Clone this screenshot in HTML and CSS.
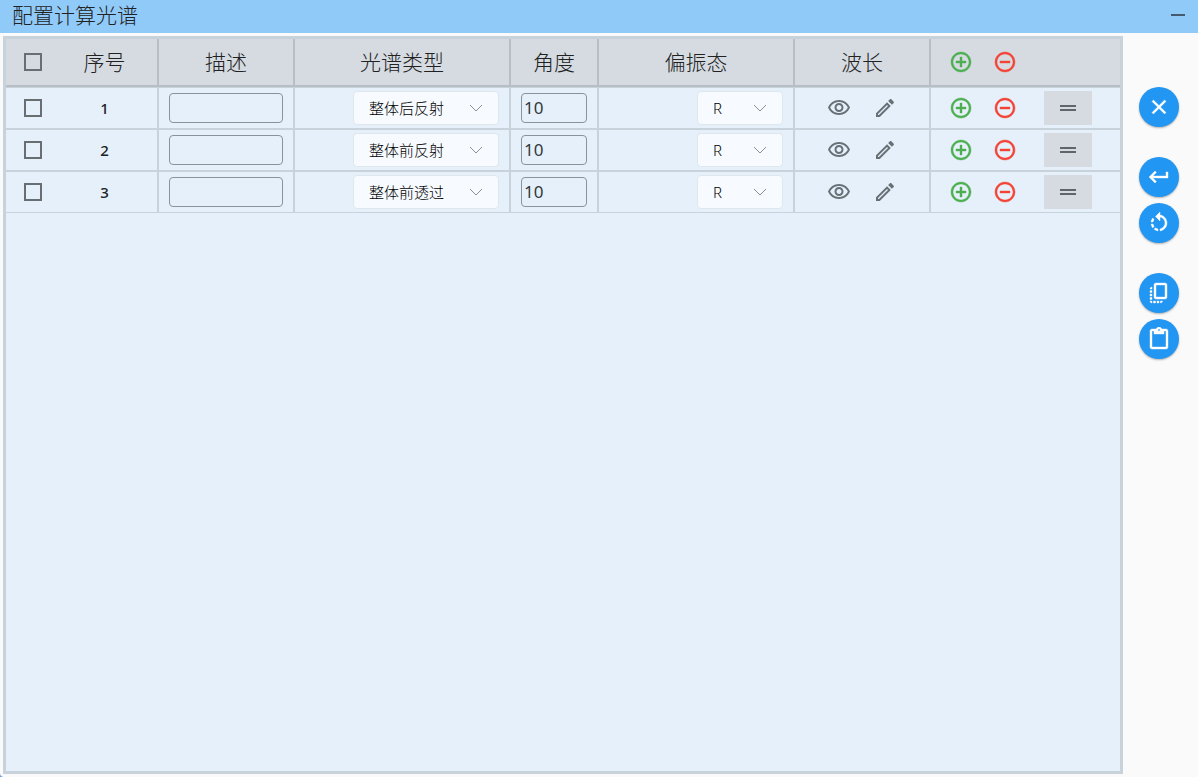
FILE: index.html
```html
<!DOCTYPE html>
<html lang="zh-CN">
<head>
    <meta charset="UTF-8">
    <meta name="viewport" content="width=device-width, initial-scale=1.0">
    <title>配置计算光谱</title>
    <link rel="stylesheet" href="styles.css">
</head>
<body>

<svg class="sprite" aria-hidden="true">
    <symbol id="plus" viewBox="0 0 24 24"><path d="M13 7h-2v4H7v2h4v4h2v-4h4v-2h-4V7zm-1-5C6.480 2 2 6.480 2 12s4.480 10 10 10 10-4.480 10-10S17.520 2 12 2zm0 18c-4.410 0-8-3.590-8-8s3.590-8 8-8 8 3.590 8 8-3.590 8-8 8z"/></symbol>
    <symbol id="minus" viewBox="0 0 24 24"><path d="M7 11v2h10v-2H7zm5-9C6.480 2 2 6.480 2 12s4.480 10 10 10 10-4.480 10-10S17.520 2 12 2zm0 18c-4.410 0-8-3.590-8-8s3.590-8 8-8 8 3.590 8 8-3.590 8-8 8z"/></symbol>
    <symbol id="eye" viewBox="0 0 24 24"><path d="M12 6c3.790 0 7.170 2.130 8.820 5.500C19.170 14.870 15.790 17 12 17s-7.170-2.130-8.820-5.500C4.830 8.130 8.210 6 12 6m0-2C7 4 2.730 7.110 1 11.500 2.730 15.890 7 19 12 19s9.270-3.110 11-7.500C21.270 7.110 17 4 12 4zm0 5c1.380 0 2.500 1.120 2.500 2.500S13.380 14 12 14s-2.500-1.120-2.500-2.500S10.620 9 12 9m0-2c-2.480 0-4.500 2.020-4.500 4.500S9.520 16 12 16s4.500-2.020 4.500-4.500S14.480 7 12 7z"/></symbol>
    <symbol id="pencil" viewBox="0 0 24 24"><path d="M14.060 9.020l.92.92L5.920 19H5v-.92l9.060-9.060M17.660 3c-.25 0-.51.1-.7.290l-1.830 1.830 3.750 3.750 1.830-1.830c.39-.39.39-1.020 0-1.410l-2.340-2.340c-.2-.2-.45-.290-.71-.290zm-3.600 3.190L3 17.250V21h3.750L17.810 9.940l-3.750-3.750z"/></symbol>
    <symbol id="drag" viewBox="0 0 24 24"><path d="M20 9H4v2h16V9zM4 15h16v-2H4v2z"/></symbol>
    <symbol id="chevron" viewBox="0 0 14 8"><path d="M1 1l6 6 6-6" fill="none" stroke="currentColor"/></symbol>
</svg>

<div class="window">
    <header class="titlebar">
        <h1 class="title">配置计算光谱</h1>
        <button class="minimize" aria-label="最小化"></button>
    </header>

    <div class="content">
        <main class="panel">
            <table class="spectra">
                <colgroup>
                    <col class="col-index">
                    <col class="col-desc">
                    <col class="col-type">
                    <col class="col-angle">
                    <col class="col-polar">
                    <col class="col-wave">
                    <col>
                </colgroup>
                <thead>
                    <tr>
                        <th><div class="index"><input class="check" type="checkbox" aria-label="全选"><span class="index-text">序号</span></div></th>
                        <th>描述</th>
                        <th>光谱类型</th>
                        <th>角度</th>
                        <th>偏振态</th>
                        <th>波长</th>
                        <th>
                            <div class="actions">
                                <button class="icon-button add" aria-label="添加"><svg><use href="#plus"/></svg></button>
                                <button class="icon-button remove" aria-label="删除"><svg><use href="#minus"/></svg></button>
                            </div>
                        </th>
                    </tr>
                </thead>
                <tbody>
                    <tr>
                        <td><div class="index"><input class="check" type="checkbox" aria-label="选择 1"><span class="index-text">1</span></div></td>
                        <td><input class="field" type="text" aria-label="描述"></td>
                        <td>
                            <div class="select type">
                                <select aria-label="光谱类型"><option>整体后反射</option><option>整体前反射</option><option>整体前透过</option></select>
                                <svg><use href="#chevron"/></svg>
                            </div>
                        </td>
                        <td><input class="field" type="text" value="10" aria-label="角度"></td>
                        <td>
                            <div class="select polar">
                                <select aria-label="偏振态"><option>R</option></select>
                                <svg><use href="#chevron"/></svg>
                            </div>
                        </td>
                        <td>
                            <div class="wave">
                                <button class="icon-button" aria-label="查看"><svg><use href="#eye"/></svg></button>
                                <button class="icon-button" aria-label="编辑"><svg><use href="#pencil"/></svg></button>
                            </div>
                        </td>
                        <td>
                            <div class="actions">
                                <button class="icon-button add" aria-label="添加"><svg><use href="#plus"/></svg></button>
                                <button class="icon-button remove" aria-label="删除"><svg><use href="#minus"/></svg></button>
                                <button class="handle" aria-label="拖动"><svg><use href="#drag"/></svg></button>
                            </div>
                        </td>
                    </tr>
                    <tr>
                        <td><div class="index"><input class="check" type="checkbox" aria-label="选择 2"><span class="index-text">2</span></div></td>
                        <td><input class="field" type="text" aria-label="描述"></td>
                        <td>
                            <div class="select type">
                                <select aria-label="光谱类型"><option>整体后反射</option><option selected>整体前反射</option><option>整体前透过</option></select>
                                <svg><use href="#chevron"/></svg>
                            </div>
                        </td>
                        <td><input class="field" type="text" value="10" aria-label="角度"></td>
                        <td>
                            <div class="select polar">
                                <select aria-label="偏振态"><option>R</option></select>
                                <svg><use href="#chevron"/></svg>
                            </div>
                        </td>
                        <td>
                            <div class="wave">
                                <button class="icon-button" aria-label="查看"><svg><use href="#eye"/></svg></button>
                                <button class="icon-button" aria-label="编辑"><svg><use href="#pencil"/></svg></button>
                            </div>
                        </td>
                        <td>
                            <div class="actions">
                                <button class="icon-button add" aria-label="添加"><svg><use href="#plus"/></svg></button>
                                <button class="icon-button remove" aria-label="删除"><svg><use href="#minus"/></svg></button>
                                <button class="handle" aria-label="拖动"><svg><use href="#drag"/></svg></button>
                            </div>
                        </td>
                    </tr>
                    <tr>
                        <td><div class="index"><input class="check" type="checkbox" aria-label="选择 3"><span class="index-text">3</span></div></td>
                        <td><input class="field" type="text" aria-label="描述"></td>
                        <td>
                            <div class="select type">
                                <select aria-label="光谱类型"><option>整体后反射</option><option>整体前反射</option><option selected>整体前透过</option></select>
                                <svg><use href="#chevron"/></svg>
                            </div>
                        </td>
                        <td><input class="field" type="text" value="10" aria-label="角度"></td>
                        <td>
                            <div class="select polar">
                                <select aria-label="偏振态"><option>R</option></select>
                                <svg><use href="#chevron"/></svg>
                            </div>
                        </td>
                        <td>
                            <div class="wave">
                                <button class="icon-button" aria-label="查看"><svg><use href="#eye"/></svg></button>
                                <button class="icon-button" aria-label="编辑"><svg><use href="#pencil"/></svg></button>
                            </div>
                        </td>
                        <td>
                            <div class="actions">
                                <button class="icon-button add" aria-label="添加"><svg><use href="#plus"/></svg></button>
                                <button class="icon-button remove" aria-label="删除"><svg><use href="#minus"/></svg></button>
                                <button class="handle" aria-label="拖动"><svg><use href="#drag"/></svg></button>
                            </div>
                        </td>
                    </tr>
                </tbody>
            </table>
        </main>

        <aside class="tools">
            <div class="tool-group">
                <button class="fab" aria-label="关闭"><svg viewBox="0 0 24 24"><path d="M19 6.410L17.590 5 12 10.590 6.410 5 5 6.410 10.590 12 5 17.590 6.410 19 12 13.410 17.590 19 19 17.590 13.410 12z"/></svg></button>
            </div>
            <div class="tool-group">
                <button class="fab" aria-label="确认"><svg viewBox="0 0 24 24"><path d="M19 7v4H5.830l3.580-3.590L8 6l-6 6 6 6 1.410-1.410L5.830 13H21V7z"/></svg></button>
                <button class="fab" aria-label="重置"><svg viewBox="0 0 24 24"><path d="M7.110 8.530L5.700 7.110C4.800 8.270 4.240 9.610 4.070 11h2.020c.14-.87.49-1.720 1.020-2.470zM6.090 13H4.070c.17 1.390.72 2.730 1.620 3.890l1.410-1.420c-.52-.75-.87-1.590-1.010-2.470zm1.010 5.320c1.160.9 2.510 1.440 3.900 1.610V17.900c-.87-.15-1.710-.49-2.460-1.030L7.100 18.320zM13 4.070V1L8.450 5.550 13 10V6.090c2.840.48 5 2.940 5 5.910s-2.160 5.430-5 5.910v2.020c3.950-.49 7-3.850 7-7.930s-3.050-7.440-7-7.930z"/></svg></button>
            </div>
            <div class="tool-group">
                <button class="fab" aria-label="复制"><svg viewBox="0 0 24 24"><path d="M18 2H9c-1.100 0-2 .9-2 2v12c0 1.100.9 2 2 2h9c1.100 0 2-.9 2-2V4c0-1.100-.9-2-2-2zm0 14H9V4h9v12zM3 15v-2h2v2H3zm0-5.500h2v2H3v-2zM10 20h2v2h-2v-2zm-7-1.500v-2h2v2H3zM5 22c-1.100 0-2-.9-2-2h2v2zm3.500 0h-2v-2h2v2zm5 0v-2h2c0 1.100-.9 2-2 2zM5 6v2H3c0-1.100.9-2 2-2z"/></svg></button>
                <button class="fab" aria-label="粘贴"><svg viewBox="0 0 24 24"><path d="M19 2h-4.180C14.400.84 13.300 0 12 0c-1.300 0-2.400.84-2.820 2H5c-1.100 0-2 .9-2 2v16c0 1.100.9 2 2 2h14c1.100 0 2-.9 2-2V4c0-1.100-.9-2-2-2zm-7 0c.55 0 1 .45 1 1s-.45 1-1 1-1-.45-1-1 .45-1 1-1zm7 18H5V4h2v3h10V4h2v16z"/></svg></button>
            </div>
        </aside>
    </div>
</div>

</body>
</html>
```
FILE: styles.css
```css
* {
    box-sizing: border-box;
}

body {
    margin: 0;
    background-color: #5b9be0;
    color: #212121;
    font-family: "Noto Sans", "Noto Sans CJK SC", sans-serif;
}

button,
input,
select {
    margin: 0;
    padding: 0;
    border: none;
    background: none;
    color: inherit;
    font-family: inherit;
}

button {
    cursor: pointer;
}

svg {
    display: block;
    width: 24px;
    height: 24px;
    fill: currentColor;
}

.sprite {
    display: none;
}

.window {
    display: flex;
    flex-direction: column;
    min-height: 100vh;
    background-color: #fafafa;
    border-radius: 0 0 0 4px;
}

.titlebar {
    display: flex;
    align-items: center;
    justify-content: space-between;
    height: 33px;
    padding: 0 12px 3px;
    background-color: #90caf9;
}

.title {
    margin: 0;
    font-size: 21px;
    font-weight: 300;
    line-height: 30px;
}

.minimize {
    width: 16px;
    height: 16px;
    background: linear-gradient(#455a6c, #455a6c) center / 14px 2px no-repeat;
}

.content {
    display: flex;
    flex: 1;
    padding: 3px;
}

.panel {
    flex: 1;
    border: 3px solid #c8d2db;
    background-color: #e5f0fa;
}

.spectra {
    width: 100%;
    table-layout: fixed;
    border-spacing: 0;
}

.col-index {
    width: 152px;
}

.col-desc,
.col-wave {
    width: 136px;
}

.col-type {
    width: 216px;
}

.col-angle {
    width: 88px;
}

.col-polar {
    width: 196px;
}

.spectra th,
.spectra td {
    height: 42px;
    padding: 0 10px;
    border: 1px solid #c8d2db;
}

.spectra th {
    height: 48px;
    border-color: #b8bec5;
    border-width: 0 1px 2px;
    background-color: #d5dbe1;
    font-size: 21px;
    font-weight: 300;
    line-height: 30px;
}

.spectra tr > :first-child {
    padding: 0 0 0 18px;
    border-left: none;
}

.spectra tr > :last-child {
    padding: 0 0 0 18px;
    border-right: none;
}

.index {
    display: flex;
    align-items: center;
    gap: 10px;
}

.index-text {
    flex: 1;
    text-align: center;
}

td .index-text {
    font-size: 15px;
    font-weight: 500;
}

.check {
    appearance: none;
    width: 18px;
    height: 18px;
    border: 2px solid #686e72;
}

.check:checked {
    background-color: #2196f3;
}

.field {
    display: block;
    width: 100%;
    height: 30px;
    padding: 0 2px 2px;
    border: 1px solid #8a939c;
    border-radius: 4px;
    color: #33383c;
    font-size: 17px;
}

.select {
    display: grid;
    align-items: center;
    margin-left: auto;
}

.select.type {
    width: 146px;
}

.select.polar {
    width: 86px;
}

.select select,
.select svg {
    grid-area: 1 / 1;
}

.select select {
    appearance: none;
    width: 100%;
    height: 34px;
    padding: 0 32px 0 15px;
    border: 1px solid #dfe6ec;
    border-radius: 4px;
    background-color: #f7fbff;
    color: #000;
    font-size: 15px;
    font-weight: 300;
}

.select svg {
    justify-self: end;
    width: 14px;
    height: 8px;
    margin-right: 16px;
    color: #8a9095;
    pointer-events: none;
}

.icon-button {
    color: #687075;
}

.add {
    color: #4caf50;
}

.remove {
    color: #f44336;
}

.add svg,
.remove svg,
.fab svg {
    stroke: currentColor;
    stroke-width: 0.4;
}

.wave {
    display: flex;
    justify-content: center;
    gap: 22px;
}

.actions {
    display: flex;
    align-items: center;
    gap: 20px;
}

.handle {
    display: grid;
    place-items: center;
    width: 48px;
    height: 34px;
    margin-left: 7px;
    background-color: #d5dbe1;
    color: #5f666b;
}

.tools {
    display: flex;
    flex-direction: column;
    gap: 30px;
    padding: 51px 16px 0;
}

.tool-group {
    display: grid;
    gap: 6px;
}

.fab {
    display: grid;
    place-items: center;
    width: 40px;
    height: 40px;
    border-radius: 50%;
    background-color: #2196f3;
    color: #fff;
    box-shadow: 0 1px 2px rgba(0, 0, 0, 0.3);
}
```
